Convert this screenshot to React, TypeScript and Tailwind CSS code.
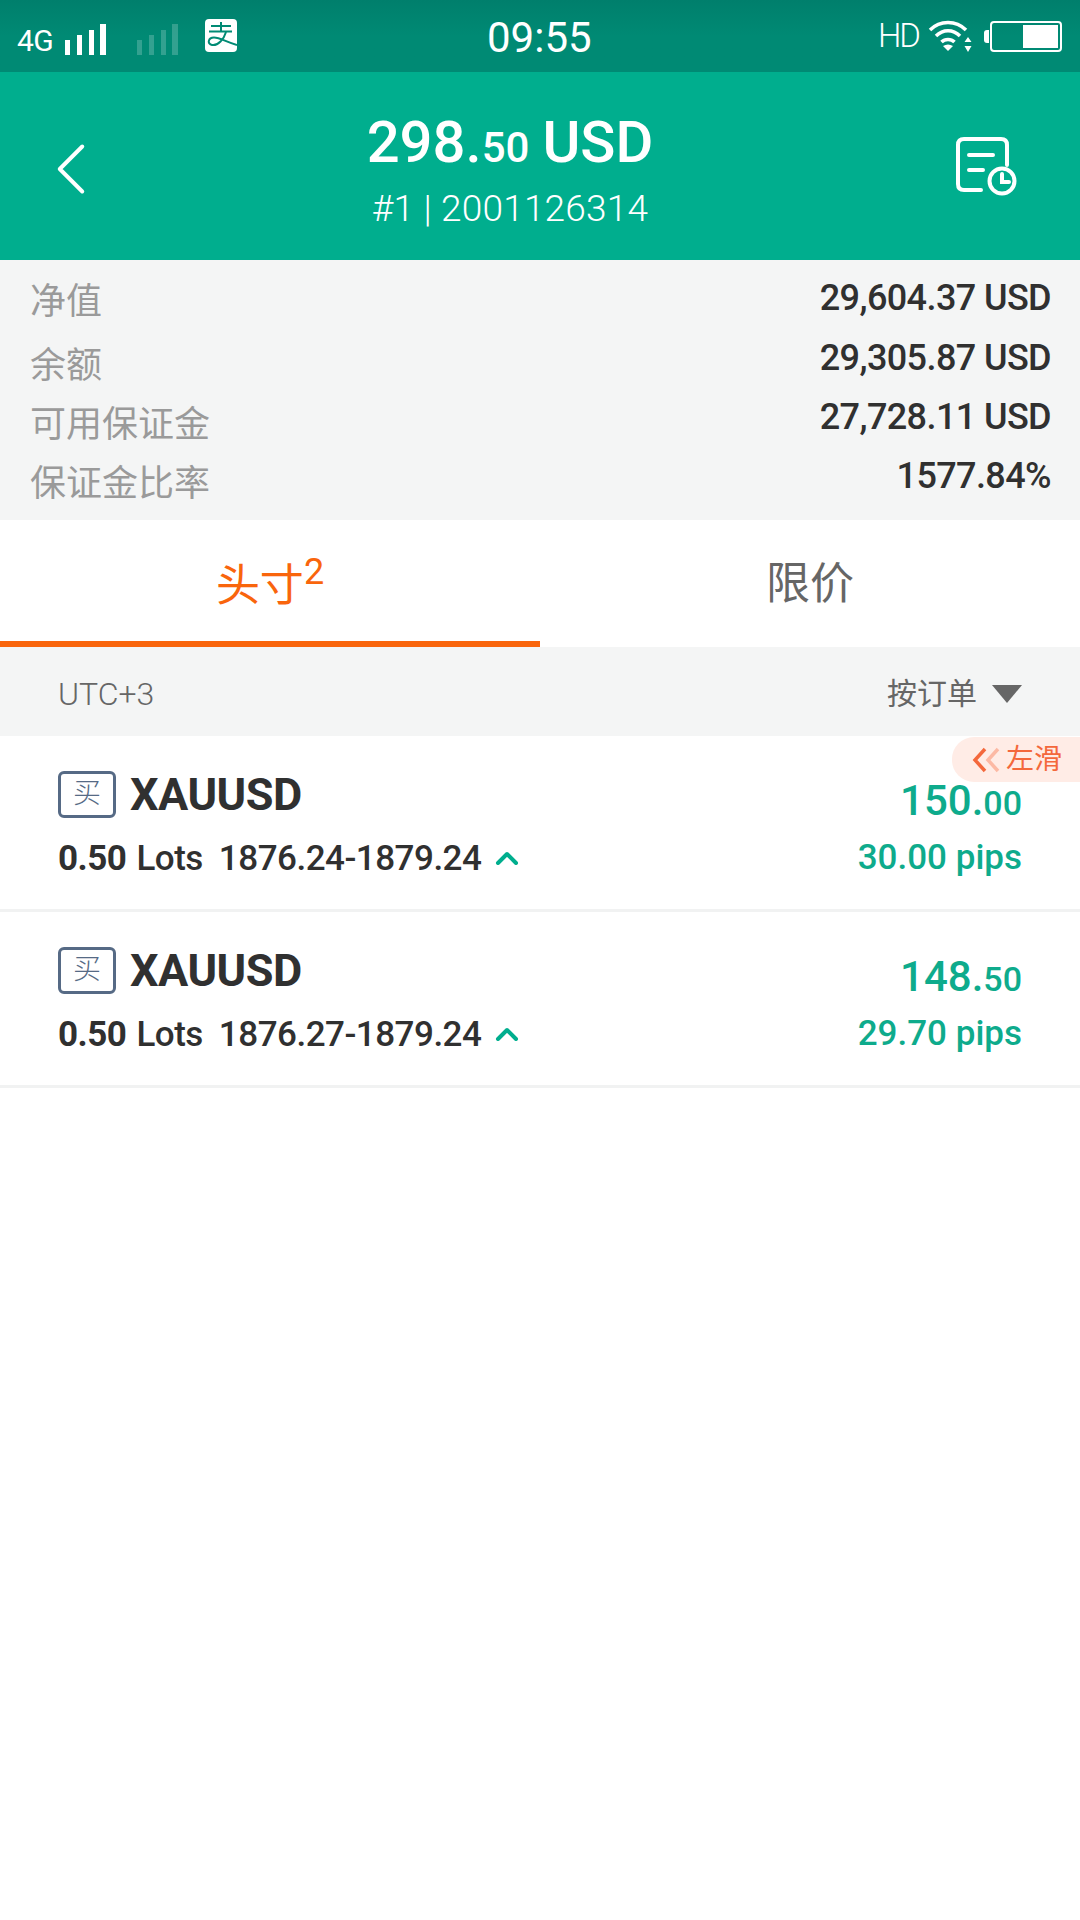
import { ChevronLeft } from "lucide-react";

const font = "font-['Roboto','Noto_Sans_CJK_SC',sans-serif]";

const summary = [
  { label: "净值", value: "29,604.37 USD" },
  { label: "余额", value: "29,305.87 USD" },
  { label: "可用保证金", value: "27,728.11 USD" },
  { label: "保证金比率", value: "1577.84%" },
];

const positions = [
  { range: "1876.24-1879.24", whole: "150.", cents: "00", pips: "30.00 pips", hint: true },
  { range: "1876.27-1879.24", whole: "148.", cents: "50", pips: "29.70 pips", hint: false },
];

function Signal({ faded }: { faded?: boolean }) {
  return (
    <svg width="42" height="31" viewBox="0 0 42 31" fill="#fff" opacity={faded ? 0.2 : 1}>
      <rect x="0" y="16" width="5" height="15" />
      <rect x="12" y="11" width="5" height="20" />
      <rect x="24" y="6" width="5" height="25" />
      <rect x="35" y="0" width="6" height="31" />
    </svg>
  );
}

function PositionRow({ p }: { p: (typeof positions)[number] }) {
  return (
    <div className="relative h-[176px] border-b-[3px] border-[#f1f2f2] pl-[58px] pr-[58px] flex justify-between">
      <div>
        <div className="flex items-center mt-[34px] h-[48px]">
          <span className="w-[58px] h-[47px] border-[3px] border-[#566a85] rounded-[6px] flex items-center justify-center text-[#566a85] text-[28px] font-light">
            买
          </span>
          <span className="ml-[14px] text-[45px] tracking-[-0.5px] font-bold text-[#303030] leading-none">XAUUSD</span>
        </div>
        <div className="flex items-center mt-[19px] text-[35px] tracking-[-0.5px] leading-[44px] text-[#303030]">
          <span className="font-bold">0.50</span>
          <span className="ml-[10px] font-medium">Lots</span>
          <span className="ml-[16px] font-medium">{p.range}</span>
          <svg className="ml-[14px] mt-[-2px]" width="24" height="14" viewBox="0 0 24 14" fill="none" stroke="#00ae8e" strokeWidth="4" strokeLinecap="round" strokeLinejoin="round">
            <path d="M3 12 L12 3 L21 12" />
          </svg>
        </div>
      </div>
      <div className="text-right text-[#0eab8c] font-medium">
        <div className="mt-[39px] h-[52px] leading-[52px]">
          <span className="text-[42px]">{p.whole}</span>
          <span className="text-[34px]">{p.cents}</span>
        </div>
        <div className="mt-[9px] text-[35px] leading-[44px]">{p.pips}</div>
      </div>
      {p.hint && (
        <div className="absolute right-0 top-[1px] w-[128px] h-[45px] rounded-l-[22px] bg-[#ffece6] flex items-center pl-[20px] text-[#f4683c] text-[28px]">
          <svg width="30" height="26" viewBox="0 0 30 26" fill="none" strokeWidth="3.5">
            <path d="M13 2 L3 13 L13 24" stroke="#f4683c" />
            <path d="M26 2 L16 13 L26 24" stroke="#fcb9a4" />
          </svg>
          <span className="ml-[4px]">左滑</span>
        </div>
      )}
    </div>
  );
}

export default function App() {
  return (
    <div className={`relative w-[1080px] h-[1920px] bg-white overflow-hidden ${font}`}>
      {/* status bar */}
      <div className="h-[72px] bg-gradient-to-b from-[#007f6c] via-[#008a74] to-[#008a74] flex items-center justify-between pl-[17px] pr-[18px] text-white">
        <div className="flex items-center">
          <span className="text-[30px] tracking-[-0.5px] mt-[8px]">4G</span>
          <span className="ml-[12px] mt-[6px]"><Signal /></span>
          <span className="ml-[30px] mt-[6px]"><Signal faded /></span>
          <svg className="ml-[26px] mt-[-1px]" width="32" height="33" viewBox="0 0 32 33">
            <rect width="32" height="33" rx="4" fill="#fff" />
            <path d="M6 7 H26 M16 3 V13 M4 12.500 H27" stroke="#008a74" strokeWidth="2" fill="none" />
            <path d="M21 13 C19 20 13 27 7 26 C2 25 3 18.500 9 18.500 C15 18.500 21 23 32 26" stroke="#008a74" strokeWidth="2" fill="none" />
          </svg>
        </div>
        <span className="absolute left-[487px] top-[16px] text-[42px] leading-[44px]">09:55</span>
        <div className="flex items-center">
          <span className="text-[33px] font-light tracking-[-2px]">HD</span>
          <svg className="ml-[9px]" width="46" height="34" viewBox="0 0 46 34" fill="none" stroke="#fff" strokeWidth="3.5">
            <path d="M2 11 C12 1 28 1 38 11" />
            <path d="M8 17 C15 10 25 10 32 17" />
            <path d="M13.5 23 C17 19.5 23 19.5 26.5 23" />
            <path d="M20 32 L15 27 Q20 24 25 27 Z" fill="#fff" stroke="none" />
            <path d="M40 18 L43.5 23 H36.500 Z M40 33 L43.500 27 H36.500 Z" fill="#fff" stroke="none" />
          </svg>
          <span className="ml-[10px] w-[5px] h-[13px] bg-white rounded-l-[3px]" />
          <span className="ml-[1px] w-[72px] h-[31px] border-2 border-white rounded-[4px] p-[2px] flex justify-end">
            <span className="w-[35px] h-full bg-white" />
          </span>
        </div>
      </div>

      {/* account header */}
      <div className="relative h-[188px] bg-[#00ae8e] text-white">
        <ChevronLeft className="absolute left-[26px] top-[52px]" size={90} strokeWidth={1.05} />
        <div className="flex flex-col items-center pr-[60px]">
          <div className="mt-[41px] h-[58px] leading-[58px] font-medium">
            <span className="text-[58px]">298.</span>
            <span className="text-[42px]">50</span>
            <span className="text-[58px] ml-[13px]">USD</span>
          </div>
          <div className="mt-[16px] text-[37px] tracking-[0.2px] leading-[44px] font-light">#1 | 2001126314</div>
        </div>
        <svg className="absolute left-[955px] top-[64px]" width="62" height="62" viewBox="0 0 62 62" fill="none" stroke="#fff" strokeWidth="4" strokeLinecap="round">
          <path d="M26 54 H9 Q3 54 3 48 V9 Q3 3 9 3 H46 Q52 3 52 9 V29" />
          <path d="M14 19 H38 M14 34 H28" />
          <circle cx="47" cy="45" r="12.500" />
          <path d="M47 38 V46 H54" />
        </svg>
      </div>

      {/* summary */}
      <div className="h-[260px] bg-[#f4f5f5] pl-[30px] pr-[29px]">
        {summary.map((row, i) => (
          <div key={row.label} className={`flex justify-between ${i === 0 ? "h-[64px]" : "h-[59px]"}`}>
            <span className="text-[36px] leading-[44px] mt-[20px] text-[#9a9a9a]">{row.label}</span>
            <span className={`text-[36px] tracking-[-0.6px] leading-[44px] font-medium text-[#303030] ${i === 0 ? "mt-[16px]" : "mt-[12px]"}`}>
              {row.value}
            </span>
          </div>
        ))}
      </div>

      {/* tabs */}
      <div className="flex h-[127px]">
        <div className="relative w-[540px] border-b-[6px] border-[#f9650c] flex justify-center text-[#f9650c]">
          <span className="text-[44px] mt-[36px] leading-[60px]">头寸</span>
          <span className="text-[36px] leading-[40px] mt-[32px]">2</span>
        </div>
        <div className="w-[540px] flex justify-center text-[#666] text-[44px] pt-[34px] leading-[60px]">限价</div>
      </div>

      {/* list header */}
      <div className="h-[89px] bg-[#f4f5f5] flex items-center justify-between pl-[58px] pr-[58px] pt-[4px] text-[#666]">
        <span className="text-[32px] font-light">UTC+3</span>
        <div className="flex items-center">
          <span className="text-[30px]">按订单</span>
          <svg className="ml-[15px]" width="30" height="18" viewBox="0 0 30 18" fill="#666">
            <path d="M0 0 H30 L15 18 Z" />
          </svg>
        </div>
      </div>

      {positions.map((p) => (
        <PositionRow key={p.range} p={p} />
      ))}
    </div>
  );
}
